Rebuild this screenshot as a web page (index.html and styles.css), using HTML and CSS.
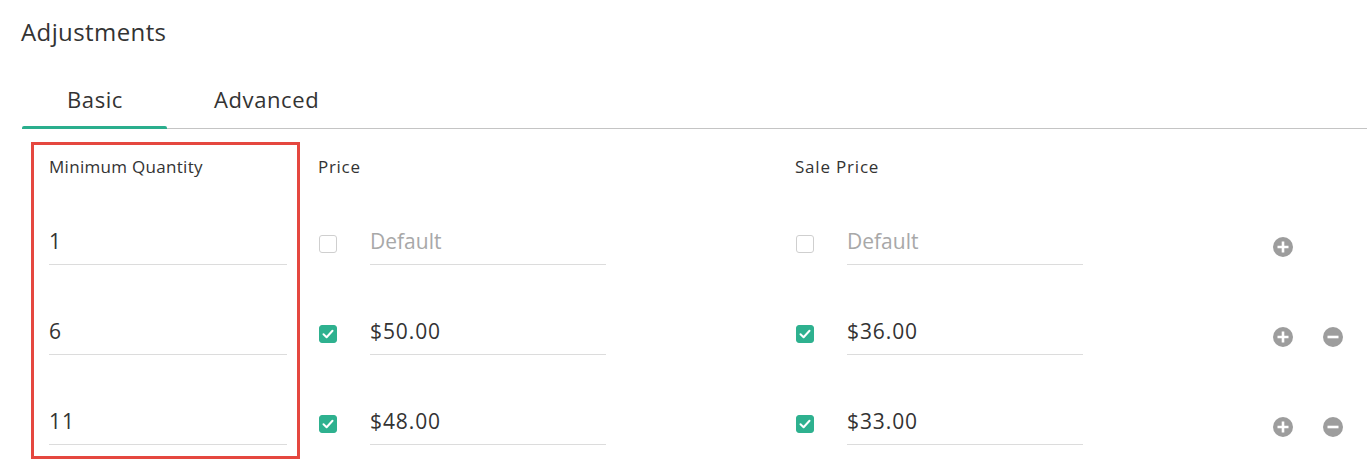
FILE: index.html
```html
<!DOCTYPE html>
<html>
<head>
<meta charset="utf-8">
<link rel="stylesheet" href="styles.css">
</head>
<body>
<div class="page">
  <h1 class="title">Adjustments</h1>
  <div class="tabs">
    <div class="tab active">Basic</div>
    <div class="tab">Advanced</div>
  </div>
  <div class="grid">
    <div class="col col-qty">
      <div class="label">Minimum Quantity</div>
      <div class="row"><div class="field">1</div></div>
      <div class="row"><div class="field">6</div></div>
      <div class="row"><div class="field">11</div></div>
    </div>
    <div class="col col-price">
      <div class="label">Price</div>
      <div class="row"><span class="cb"></span><div class="field placeholder">Default</div></div>
      <div class="row"><span class="cb checked"><svg viewBox="0 0 18 18" width="18" height="18"><path d="M4.5 9.3 L7.6 12.2 L13.5 5.8" fill="none" stroke="#fff" stroke-width="2" stroke-linecap="round" stroke-linejoin="round"/></svg></span><div class="field">$50.00</div></div>
      <div class="row"><span class="cb checked"><svg viewBox="0 0 18 18" width="18" height="18"><path d="M4.5 9.3 L7.6 12.2 L13.5 5.8" fill="none" stroke="#fff" stroke-width="2" stroke-linecap="round" stroke-linejoin="round"/></svg></span><div class="field">$48.00</div></div>
    </div>
    <div class="col col-sale">
      <div class="label">Sale Price</div>
      <div class="row"><span class="cb"></span><div class="field placeholder">Default</div></div>
      <div class="row"><span class="cb checked"><svg viewBox="0 0 18 18" width="18" height="18"><path d="M4.5 9.3 L7.6 12.2 L13.5 5.8" fill="none" stroke="#fff" stroke-width="2" stroke-linecap="round" stroke-linejoin="round"/></svg></span><div class="field">$36.00</div></div>
      <div class="row"><span class="cb checked"><svg viewBox="0 0 18 18" width="18" height="18"><path d="M4.5 9.3 L7.6 12.2 L13.5 5.8" fill="none" stroke="#fff" stroke-width="2" stroke-linecap="round" stroke-linejoin="round"/></svg></span><div class="field">$33.00</div></div>
    </div>
    <div class="col col-actions">
      <div class="label"></div>
      <div class="row">
        <svg class="icon" viewBox="0 0 20 20" width="20" height="20"><circle cx="10" cy="10" r="10" fill="#9d9d9d"/><path d="M10 4.5 V15.5 M4.5 10 H15.5" stroke="#fff" stroke-width="2.6"/></svg>
      </div>
      <div class="row">
        <svg class="icon" viewBox="0 0 20 20" width="20" height="20"><circle cx="10" cy="10" r="10" fill="#9d9d9d"/><path d="M10 4.5 V15.5 M4.5 10 H15.5" stroke="#fff" stroke-width="2.6"/></svg>
        <svg class="icon minus" viewBox="0 0 20 20" width="20" height="20"><circle cx="10" cy="10" r="10" fill="#9d9d9d"/><path d="M4.5 10 H15.5" stroke="#fff" stroke-width="2.6"/></svg>
      </div>
      <div class="row">
        <svg class="icon" viewBox="0 0 20 20" width="20" height="20"><circle cx="10" cy="10" r="10" fill="#9d9d9d"/><path d="M10 4.5 V15.5 M4.5 10 H15.5" stroke="#fff" stroke-width="2.6"/></svg>
        <svg class="icon minus" viewBox="0 0 20 20" width="20" height="20"><circle cx="10" cy="10" r="10" fill="#9d9d9d"/><path d="M4.5 10 H15.5" stroke="#fff" stroke-width="2.6"/></svg>
      </div>
    </div>
  </div>
</div>
</body>
</html>
```
FILE: styles.css
```css
* { box-sizing: border-box; }
html, body { margin: 0; padding: 0; background: #fff; }
body {
  font-family: "Open Sans", "Liberation Sans", sans-serif;
  color: #333;
  overflow: hidden;
}
.page {
  padding: 17px 0 0 21px;
}
.title {
  margin: 0;
  font-size: 24px;
  font-weight: 400;
  line-height: 30px;
  letter-spacing: 0.4px;
  color: #333;
}
.tabs {
  margin: 23px 0 0 1px;
  display: flex;
  border-bottom: 1px solid #c4c4c4;
}
.tab {
  position: relative;
  padding: 16px 44px 16px 45px;
  font-size: 22px;
  line-height: 26px;
  letter-spacing: 0.6px;
  color: #333;
}
.tab + .tab { padding-left: 47px; }
.tab.active::after {
  content: "";
  position: absolute;
  left: 0;
  right: 0;
  bottom: -1px;
  height: 3px;
  background: #2aae8d;
  border-radius: 2px 2px 0 0;
}
.grid {
  display: flex;
  align-items: flex-start;
  margin: 13px 0 0 10px;
}
.col {
  display: flex;
  flex-direction: column;
}
.label {
  font-size: 17px;
  line-height: 20px;
  height: 18px;
  letter-spacing: 0.3px;
  color: #333;
}
.col-price .label { letter-spacing: 0.7px; }
.col-sale .label { letter-spacing: 0.8px; }
.col-qty {
  width: 269px;
  border: 3px solid #e5473f;
  padding: 12px 10px 11px 15px;
}
.col-price, .col-sale {
  width: 477px;
  padding-top: 15px;
}
.col-qty, .col-price, .col-sale { flex: none; }
.col-qty { margin-right: 18px; }
.col-actions { padding-top: 15px; }
.row {
  height: 90px;
  display: flex;
  align-items: flex-end;
}
.field {
  width: 236px;
  font-size: 21px;
  line-height: 24px;
  letter-spacing: 0.9px;
  padding-bottom: 11px;
  border-bottom: 1px solid #dcdcdc;
  color: #333;
}
.col-qty .field { width: 100%; }
.field.placeholder { color: #a8a8a8; letter-spacing: 0; }
.cb {
  flex: none;
  width: 18px;
  height: 18px;
  margin: 0 33px 12px 1px;
  border: 1px solid #cfcfcf;
  border-radius: 3px;
  display: flex;
}
.cb.checked {
  border-color: #2eb18f;
  background: #2eb18f;
}
.cb svg { margin: -1px; }
.icon {
  display: block;
  margin: 0 0 8px 1px;
}
.icon.minus { margin-left: 30px; }
```
